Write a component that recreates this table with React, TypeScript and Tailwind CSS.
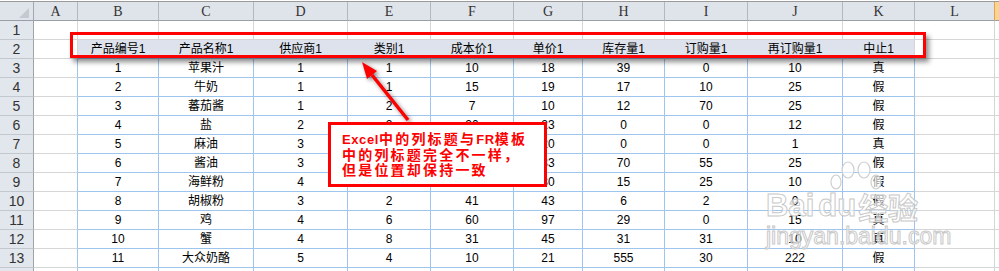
const colWidths = "grid-cols-[34px_44px_81px_95px_94px_83px_83px_69px_82px_83px_95px_72px_80px_1fr]";
const letters = ["A", "B", "C", "D", "E", "F", "G", "H", "I", "J", "K", "L"];

// 13 rows of sheet data, columns A..L
const rows: string[][] = [
  ["", "", "", "", "", "", "", "", "", "", "", ""],
  ["", "产品编号1", "产品名称1", "供应商1", "类别1", "成本价1", "单价1", "库存量1", "订购量1", "再订购量1", "中止1", ""],
  ["", "1", "苹果汁", "1", "1", "10", "18", "39", "0", "10", "真", ""],
  ["", "2", "牛奶", "1", "1", "15", "19", "17", "10", "25", "假", ""],
  ["", "3", "蕃茄酱", "1", "2", "7", "10", "12", "70", "25", "假", ""],
  ["", "4", "盐", "2", "2", "20", "23", "0", "0", "12", "假", ""],
  ["", "5", "麻油", "3", "2", "16", "20", "0", "0", "1", "真", ""],
  ["", "6", "酱油", "3", "2", "21", "33", "70", "55", "25", "假", ""],
  ["", "7", "海鲜粉", "4", "7", "25", "30", "15", "25", "10", "假", ""],
  ["", "8", "胡椒粉", "3", "2", "41", "43", "6", "2", "0", "假", ""],
  ["", "9", "鸡", "4", "6", "60", "97", "29", "0", "15", "真", ""],
  ["", "10", "蟹", "4", "8", "31", "45", "31", "31", "10", "真", ""],
  ["", "11", "大众奶酪", "5", "4", "10", "21", "555", "30", "222", "假", ""],
];

function cellClass(r: number, c: number) {
  const inTable = c >= 1 && c <= 10;
  const bottom = r >= 2 && inTable ? "border-b-[#9ec5ee]" : "border-b-[#d6d6d6]";
  let right = "border-r-[#d6d6d6]";
  if (r >= 3 && c <= 10) right = "border-r-[#9ec5ee]";
  if (r === 2 && c >= 1 && c <= 9) right = "border-r-[#dde2ec]";
  const bg = r === 2 && inTable ? "bg-[#dde2ec]" : "bg-white";
  return `${bottom} ${right} ${bg}`;
}

function Sheet() {
  return (
    <div className={`grid ${colWidths} grid-rows-[19px_repeat(13,19px)_3px]`}>
      {/* corner + column letters */}
      <div className="relative border-r border-b border-r-[#a3a8b0] border-b-[#9a9fa7] bg-[#dfe3ea]">
        <svg className="absolute left-[19px] top-[6px]" width="10" height="10" viewBox="0 0 10 10">
          <polygon points="10,0 10,10 0,10" fill="#c4c9d1" />
        </svg>
      </div>
      {letters.map((l, i) => (
        <div
          key={l}
          className={`flex items-center justify-center border-r border-b border-b-[#9a9fa7] bg-[#dfe3ea] font-['Liberation_Serif',serif] text-[14px] text-[#333] ${
            i === 11 ? "border-r-[#f0a04b]" : "border-r-[#b3b8bf]"
          }`}
        >
          {l}
        </div>
      ))}
      <div className="border-b border-b-[#9a9fa7] bg-[#f9d690]" />

      {rows.map((row, ri) => {
        const r = ri + 1;
        return [
          <div
            key={`h${r}`}
            className="flex items-center justify-center border-r border-b border-r-[#9ea3ab] border-b-[#c3c8cf] bg-[#e2e6ed] text-[14px] text-[#333]"
          >
            {r}
          </div>,
          ...row.map((v, c) => (
            <div
              key={`${r}-${c}`}
              className={`flex items-center justify-center border-r border-b text-[12px] text-black ${cellClass(r, c)}`}
            >
              {v}
            </div>
          )),
          <div key={`m${r}`} className="border-b border-b-[#d6d6d6] bg-white" />,
        ];
      })}

      {/* partial row 14 */}
      <div className="border-r border-r-[#9ea3ab] bg-[#e2e6ed]" />
      {letters.map((l, c) => (
        <div
          key={`p${l}`}
          className={`border-r ${c <= 10 ? "border-r-[#9ec5ee]" : "border-r-[#d6d6d6]"}`}
        />
      ))}
      <div />
    </div>
  );
}

function Watermark() {
  return (
    <div className="absolute left-[766px] top-[160px] flex flex-col text-white/60 [-webkit-text-stroke:1px_#c9c9c9] font-['Liberation_Sans',sans-serif] select-none">
      <svg className="absolute left-[60px] top-[0px]" width="60" height="34" viewBox="0 0 60 34">
        <g fill="rgba(255,255,255,0.6)" stroke="#cfcfcf" strokeWidth="1.2">
          <ellipse cx="10" cy="22" rx="5" ry="7" />
          <ellipse cx="22" cy="10" rx="6" ry="8" />
          <ellipse cx="38" cy="10" rx="6" ry="8" />
          <ellipse cx="50" cy="22" rx="5" ry="7" />
        </g>
      </svg>
      <div className="flex items-end pt-[30px] text-[31px] font-bold leading-none">
        <span>Bai</span>
        <span className="ml-[4px]">du</span>
        <span className="ml-[2px] font-['Noto_Sans_CJK_SC',sans-serif] text-[30px]">经验</span>
      </div>
      <div className="mt-[4px] text-[23px] leading-none">jingyan.baidu.com</div>
    </div>
  );
}

export default function App() {
  return (
    <div className="relative h-[271px] w-[999px] overflow-hidden bg-white font-['Liberation_Sans','Noto_Sans_CJK_SC',sans-serif]">
      <div className="h-px bg-white" />
      <div className="border-t border-t-[#9a9a9a]">
        <Sheet />
      </div>

      {/* red frame around the header row */}
      <div className="absolute left-[70px] top-[32px] h-[26px] w-[856px] border-[3px] border-[#ff0000] shadow-[3px_4px_5px_rgba(0,0,0,0.45)]" />

      {/* arrow */}
      <svg className="pointer-events-none absolute inset-0" width="999" height="271">
        <g style={{ filter: "drop-shadow(2px 2px 2px rgba(0,0,0,0.45))" }}>
          <line x1="408" y1="120" x2="372" y2="75" stroke="#ff0000" strokeWidth="3.5" />
          <polygon points="362,62 377,71 367,79" fill="#ff0000" />
        </g>
      </svg>

      {/* callout */}
      <div className="absolute left-[328px] top-[122px] h-[65px] w-[219px] border-[3px] border-[#ff0000] bg-white pl-[11px] pt-[6px] font-['Noto_Sans_CJK_SC',sans-serif] text-[14px] font-bold leading-[15px] tracking-[2.2px] text-[#ff0000]">
        <span className="font-['Liberation_Sans',sans-serif] text-[13px] tracking-[0.6px]">Excel</span>中的列标题与
        <span className="font-['Liberation_Sans',sans-serif] text-[13px] tracking-[0.6px]">FR</span>模板
        <br />
        中的列标题完全不一样，
        <br />
        但是位置却保持一致
      </div>

      <Watermark />
    </div>
  );
}
